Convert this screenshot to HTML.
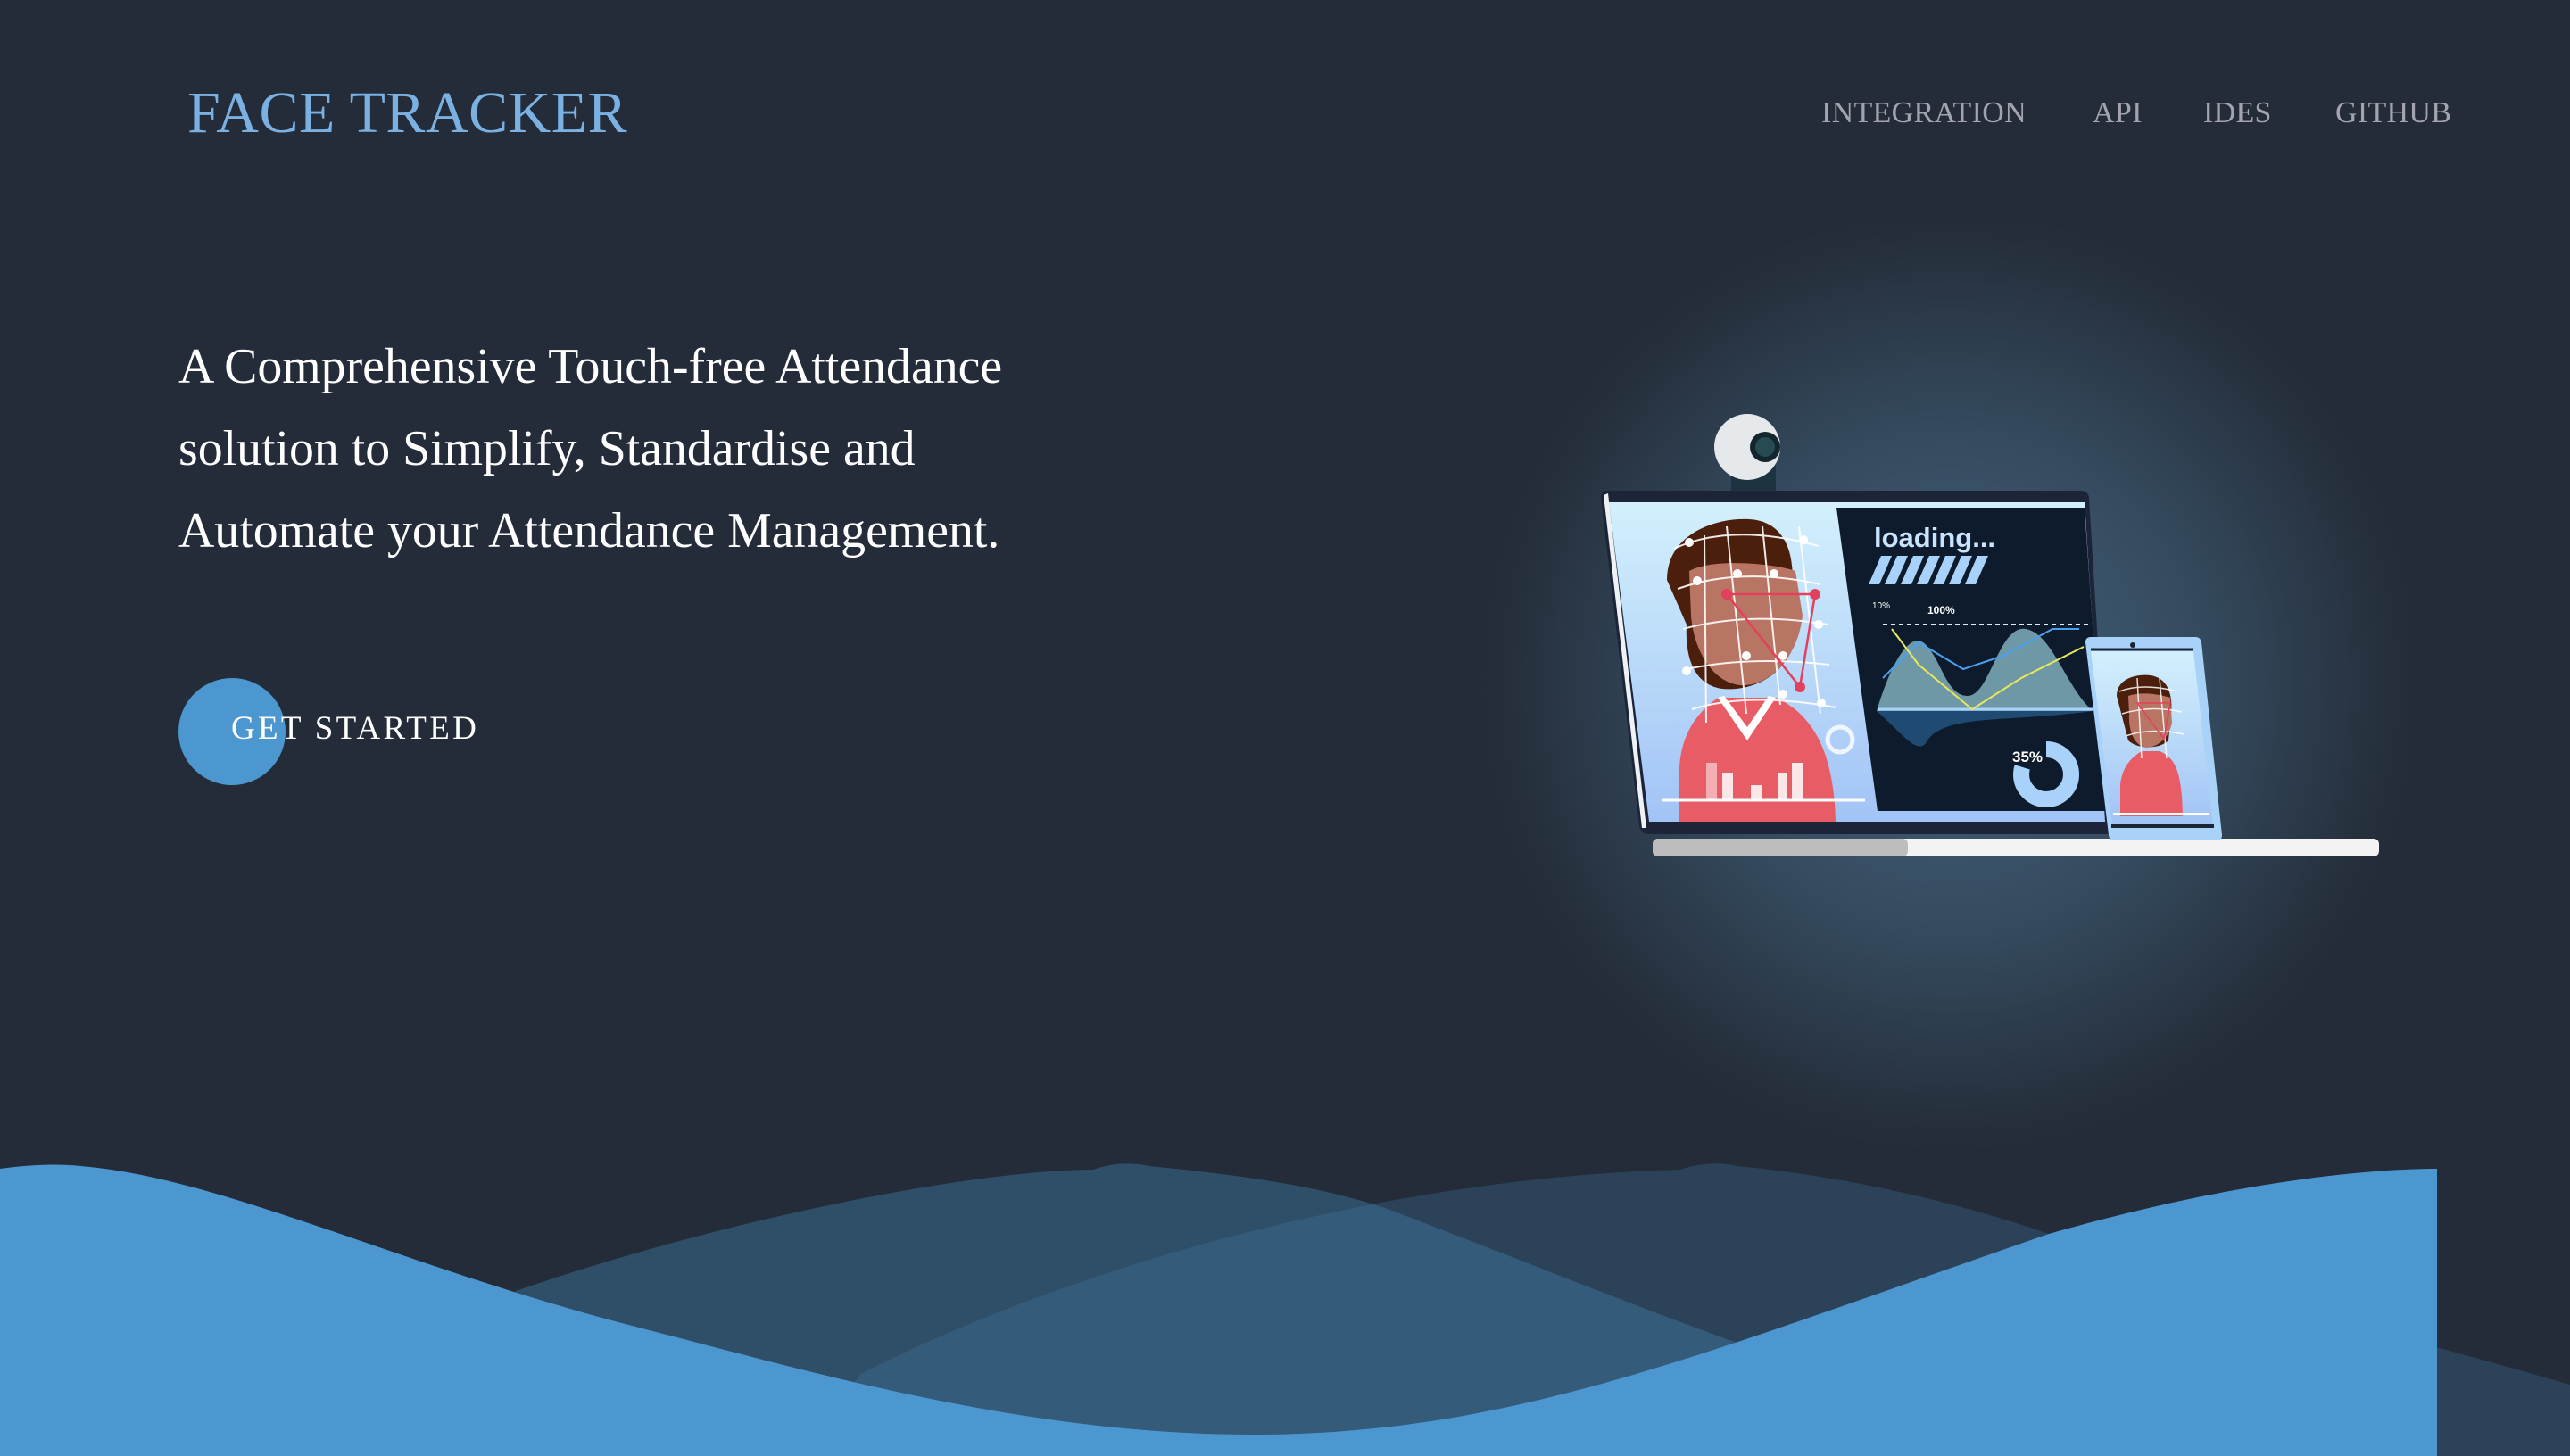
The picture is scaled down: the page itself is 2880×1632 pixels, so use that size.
<!DOCTYPE html>
<html><head><meta charset="utf-8"><style>
html,body{margin:0;padding:0}
body{width:2880px;height:1632px;background:#232c38;position:relative;overflow:hidden;font-family:"Liberation Serif",serif}
.logo{position:absolute;left:210px;top:94px;font-size:66px;color:#7ab0e2;letter-spacing:0.5px;white-space:nowrap;line-height:1}
.nav a{position:absolute;top:110px;font-size:34px;color:#a3a4b0;text-decoration:none;line-height:1;white-space:nowrap;letter-spacing:0.3px}
.hero{position:absolute;left:200px;top:365px;font-size:55.8px;line-height:92px;color:#fff;white-space:nowrap}
.btn{position:absolute;left:200px;top:760px;width:120px;height:120px;border-radius:50%;background:#4d97d0}
.btnt{position:absolute;left:259px;top:798px;font-size:37px;color:#fff;letter-spacing:3.3px;line-height:1;white-space:nowrap}
svg{position:absolute;left:0;top:0}
</style></head><body>
<svg width="2880" height="1632" viewBox="0 0 2880 1632">
<defs>
<radialGradient id="glow" cx="2185" cy="765" r="530" gradientUnits="userSpaceOnUse">
<stop offset="0" stop-color="#44637d"/><stop offset="0.55" stop-color="#34495d"/><stop offset="0.92" stop-color="#26303d"/><stop offset="1" stop-color="#232c38"/></radialGradient>
<linearGradient id="scr" x1="0" y1="0" x2="0" y2="1"><stop offset="0" stop-color="#d2f0fc"/><stop offset="1" stop-color="#a2c3f6"/></linearGradient>
<clipPath id="w1"><path d="M300,1632 L578,1447 C800,1370 1080,1312 1225,1311 Q1255,1300 1288,1307 C1400,1318 1480,1330 1552,1354 C1700,1410 1820,1460 1960,1510 L1960,1632 Z"/></clipPath>
</defs>
<rect x="1660" y="250" width="1040" height="1040" fill="url(#glow)"/>
<path d="M300,1632 L578,1447 C800,1370 1080,1312 1225,1311 Q1255,1300 1288,1307 C1400,1318 1480,1330 1552,1354 C1700,1410 1820,1460 1960,1510 L1960,1632 Z" fill="#2f4e67"/>
<path d="M900,1632 L964,1540 C1200,1420 1550,1320 1883,1311 Q1915,1300 1947,1307 C2080,1320 2200,1350 2296,1383 C2500,1450 2700,1500 2880,1552 L2880,1632 Z" fill="#2c4258"/>
<path d="M900,1632 L964,1540 C1200,1420 1550,1320 1883,1311 Q1915,1300 1947,1307 C2080,1320 2200,1350 2296,1383 C2500,1450 2700,1500 2880,1552 L2880,1632 Z" fill="#355b7b" clip-path="url(#w1)"/>
<path d="M0,1310 C30,1306 60,1304 90,1307 C250,1320 450,1420 716,1488 C900,1535 1150,1610 1414,1608 C1700,1605 1900,1520 2296,1383 C2500,1325 2650,1310 2731,1310 L2731,1632 L0,1632 Z" fill="#4d97d0"/>
<rect x="1940" y="515" width="50" height="40" fill="#1c3340"/>
<circle cx="1958" cy="501" r="37" fill="#e6e9ec"/>
<circle cx="1978" cy="501" r="17" fill="#13262e"/><circle cx="1978" cy="501" r="11" fill="#284a52"/>
<path d="M1800,550 L2332,550 Q2340,550 2341,558 L2364,935 L1848,935 Q1838,935 1837,925 L1794,558 Q1794,550 1800,550Z" fill="#1c2438"/>
<path d="M1797,555 L1802,553 L1845,928 L1840,928Z" fill="#eef2f5"/>
<path d="M1803,563 L2336,563 L2359,921 L1848,921Z" fill="url(#scr)"/>
<path d="M2058,569 L2336,569 L2359,909 L2104,909Z" fill="#0d1b2c"/>
<rect x="1852" y="940" width="814" height="20" rx="6" fill="#f3f3f3"/>
<rect x="1852" y="940" width="286" height="20" rx="6" fill="#bdbdbd"/>
<path d="M1868,650 C1868,600 1920,580 1960,582 C2000,584 2012,620 2008,660 L2010,720 C2000,760 1960,775 1930,772 C1900,768 1888,740 1890,700Z" fill="#4b1f0c"/>
<path d="M1893,640 C1920,625 1990,632 2012,640 L2020,690 C2015,735 1985,770 1950,768 C1920,765 1898,730 1895,690Z" fill="#b97563"/>
<path d="M1882,860 C1885,810 1915,790 1925,782 L1990,782 C2030,800 2055,840 2057,921 L1882,921Z" fill="#e75c65"/>
<path d="M1925,782 L1958,830 L1990,782 L1982,780 L1958,815 L1932,780Z" fill="#fff"/>
<path d="M1863,897 L2090,897" stroke="#fff" stroke-width="3"/>
<g fill="#fff" opacity="0.85"><rect x="1930" y="866" width="12" height="31"/><rect x="1962" y="880" width="12" height="17"/><rect x="1992" y="866" width="10" height="31"/><rect x="2008" y="855" width="12" height="42"/><rect x="1912" y="855" width="12" height="42" opacity=".6"/></g>
<g stroke="#fff" stroke-width="2" fill="none" opacity="0.9">
<path d="M1876,615 Q1940,585 2038,612"/><path d="M1880,660 Q1950,635 2040,655"/><path d="M1886,705 Q1960,685 2048,700"/><path d="M1890,750 Q1960,735 2050,745"/><path d="M1896,795 Q1960,775 2058,793"/>
<path d="M1910,600 L1912,810"/><path d="M1935,590 L1957,800"/><path d="M1975,590 L1995,790"/><path d="M2016,590 L2040,800"/></g>
<g fill="#fff"><circle cx="1893" cy="608" r="5"/><circle cx="1902" cy="651" r="5"/><circle cx="1947" cy="643" r="5"/><circle cx="1988" cy="643" r="5"/><circle cx="2021" cy="605" r="5"/><circle cx="2038" cy="700" r="5"/><circle cx="1957" cy="735" r="5"/><circle cx="1998" cy="735" r="5"/><circle cx="1890" cy="752" r="5"/><circle cx="1998" cy="778" r="5"/><circle cx="2041" cy="788" r="5"/></g>
<path d="M1935,666 L2034,666 L2017,770 Z" stroke="#e2405d" stroke-width="2.5" fill="none"/>
<g fill="#e2405d"><circle cx="1935" cy="666" r="6"/><circle cx="2034" cy="666" r="6"/><circle cx="2017" cy="770" r="6"/></g>
<circle cx="2062" cy="829" r="14" fill="none" stroke="#fff" stroke-width="5" opacity=".8"/>
<text x="2100" y="613" font-family="Liberation Sans,sans-serif" font-weight="bold" font-size="31" fill="#c8e4ff">loading...</text>
<g fill="#a9d2fb"><path d="M2094,655 L2108,623 L2120,623 L2106,655Z"/><path d="M2112,655 L2126,623 L2138,623 L2124,655Z"/><path d="M2130,655 L2144,623 L2156,623 L2142,655Z"/><path d="M2148,655 L2162,623 L2174,623 L2160,655Z"/><path d="M2166,655 L2180,623 L2192,623 L2178,655Z"/><path d="M2184,655 L2198,623 L2210,623 L2196,655Z"/><path d="M2202,655 L2216,623 L2228,623 L2214,655Z"/></g>
<path d="M2103,797 C2120,740 2140,710 2155,720 C2175,735 2180,780 2205,780 C2230,780 2240,700 2270,705 C2300,710 2315,770 2345,797 Z" fill="#8fc3cf" opacity=".75"/>
<path d="M2103,797 C2130,820 2150,850 2160,830 C2180,800 2250,810 2345,797 Z" fill="#1f4a72"/>
<path d="M2105,795 L2345,795" stroke="#a9d2fb" stroke-width="3"/>
<path d="M2110,700 L2340,700" stroke="#dbefff" stroke-width="2" stroke-dasharray="5,4"/>
<path d="M2110,760 L2150,720 L2200,750 L2245,735 L2300,705 L2330,705" stroke="#4aa0f0" stroke-width="2" fill="none"/>
<path d="M2120,705 L2150,745 L2210,795 L2265,760 L2335,725" stroke="#e8e85a" stroke-width="2" fill="none"/>
<text x="2160" y="688" font-family="Liberation Sans,sans-serif" font-weight="bold" font-size="12" fill="#fff">100%</text>
<text x="2098" y="682" font-family="Liberation Sans,sans-serif" font-size="10" fill="#fff">10%</text>
<circle cx="2293" cy="868" r="28" fill="none" stroke="#a9d2fb" stroke-width="18" stroke-dasharray="140 200" transform="rotate(-90 2293 868)"/>
<text x="2255" y="854" font-family="Liberation Sans,sans-serif" font-weight="bold" font-size="17" fill="#fff">35%</text>
<path d="M2343,714 L2460,714 Q2466,714 2467,720 L2490,936 Q2490,942 2484,942 L2369,942 Q2364,942 2363,936 L2337,720 Q2337,714 2343,714Z" fill="#a8d2f7"/>
<path d="M2343,730 L2458,730 L2480,925 L2367,925Z" fill="url(#scr)"/>
<path d="M2343,728 L2458,728" stroke="#1c2438" stroke-width="3"/><path d="M2366,926 L2481,926" stroke="#1c2438" stroke-width="4"/>
<circle cx="2390" cy="723" r="3" fill="#1c2438"/>
<path d="M2372,780 C2372,760 2395,755 2410,757 C2430,760 2435,780 2433,800 L2430,830 C2420,840 2395,840 2385,830Z" fill="#4b1f0c"/>
<path d="M2385,780 C2400,775 2420,778 2432,782 L2434,810 C2430,830 2415,838 2405,838 C2392,836 2385,820 2386,800Z" fill="#b97563"/>
<path d="M2376,880 C2378,855 2395,845 2400,842 L2420,842 C2440,850 2445,870 2446,915 L2376,915Z" fill="#e75c65"/>
<path d="M2368,912 L2475,912" stroke="#fff" stroke-width="2"/>
<g stroke="#fff" stroke-width="1.5" fill="none" opacity=".85"><path d="M2375,775 Q2400,765 2440,775"/><path d="M2378,800 Q2410,790 2445,798"/><path d="M2382,825 Q2410,815 2448,823"/><path d="M2395,760 L2400,850"/><path d="M2420,760 L2428,850"/></g>
<path d="M2395,788 L2432,788 L2425,828Z" stroke="#e2405d" stroke-width="1.5" fill="none"/>
</svg>
<div class="logo">FACE TRACKER</div>
<div class="nav"><a style="left:2041px">INTEGRATION</a><a style="left:2345px">API</a><a style="left:2469px">IDES</a><a style="left:2617px">GITHUB</a></div>
<div class="hero">A Comprehensive Touch-free Attendance<br>solution to Simplify, Standardise and<br>Automate your Attendance Management.</div>
<div class="btn"></div>
<div class="btnt">GET STARTED</div>
</body></html>
